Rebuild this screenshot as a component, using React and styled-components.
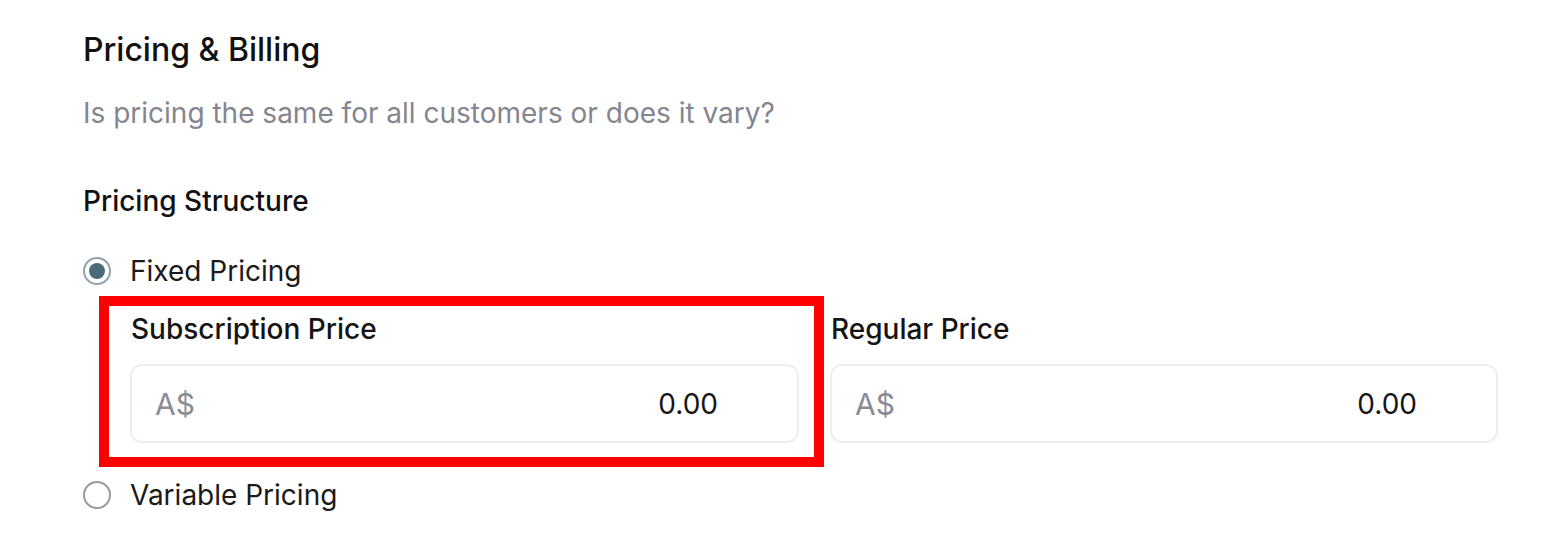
import React from "react";
import styled, { createGlobalStyle } from "styled-components";

const Global = createGlobalStyle`
  html, body { margin: 0; padding: 0; background: #ffffff; }
  body { font-family: Inter, "Noto Sans", sans-serif; color: #111111; }
`;

const Page = styled.div`
  width: 1544px;
  height: 554px;
  box-sizing: border-box;
  padding: 30px 46px 0 83px;
  overflow: hidden;
`;

const Title = styled.h2`
  margin: 0;
  font-size: 32px;
  line-height: 40px;
  font-weight: 500;
  color: #111111;
`;

const Subtitle = styled.p`
  margin: 27px 0 0;
  font-size: 28px;
  line-height: 32px;
  font-weight: 400;
  color: #85858f;
`;

const GroupLabel = styled.div`
  margin-top: 56px;
  font-size: 28px;
  line-height: 32px;
  font-weight: 500;
  color: #111111;
`;

const Options = styled.div`
  margin-top: 37px;
  display: flex;
  flex-direction: column;
`;

const RadioRow = styled.label`
  display: flex;
  align-items: center;
  gap: 19px;
  font-size: 28px;
  line-height: 34px;
  color: #1a1a1a;
`;

const RadioCircle = styled.span`
  box-sizing: border-box;
  width: 28px;
  height: 28px;
  border-radius: 50%;
  border: 2px solid ${(p) => (p.$checked ? "#8ea3ab" : "#9a9a9a")};
  display: flex;
  align-items: center;
  justify-content: center;
  flex: none;
  &::after {
    content: "";
    width: 16px;
    height: 16px;
    border-radius: 50%;
    background: #4b6b77;
    display: ${(p) => (p.$checked ? "block" : "none")};
  }
`;

const Fields = styled.div`
  margin: 25px 0 35px 47px;
  display: grid;
  grid-template-columns: 669px 668px;
  column-gap: 31px;
`;

const Field = styled.div`
  position: relative;
  display: flex;
  flex-direction: column;
`;

const Highlight = styled.div`
  position: absolute;
  left: -31px;
  right: -25px;
  top: -17px;
  bottom: -24px;
  border: 10px solid #ff0000;
  pointer-events: none;
`;

const FieldLabel = styled.div`
  font-size: 28px;
  line-height: 32px;
  font-weight: 500;
  color: #141414;
  padding-left: 1px;
`;

const InputBox = styled.div`
  margin-top: 19px;
  box-sizing: border-box;
  height: 79px;
  border: 2px solid #eeeeee;
  border-radius: 12px;
  display: flex;
  align-items: center;
  padding: 0 79px 0 23px;
  background: #ffffff;
`;

const Prefix = styled.span`
  font-size: 30px;
  color: #8b8b94;
`;

const Value = styled.span`
  margin-left: auto;
  font-size: 28px;
  color: #151515;
`;

function PriceField({ label, highlighted }) {
  return (
    <Field>
      {highlighted && <Highlight />}
      <FieldLabel>{label}</FieldLabel>
      <InputBox>
        <Prefix>A$</Prefix>
        <Value>0.00</Value>
      </InputBox>
    </Field>
  );
}

export default function App() {
  return (
    <>
      <Global />
      <Page>
        <Title>Pricing &amp; Billing</Title>
        <Subtitle>Is pricing the same for all customers or does it vary?</Subtitle>
        <GroupLabel>Pricing Structure</GroupLabel>
        <Options>
          <RadioRow>
            <RadioCircle $checked />
            Fixed Pricing
          </RadioRow>
          <Fields>
            <PriceField label="Subscription Price" highlighted />
            <PriceField label="Regular Price" />
          </Fields>
          <RadioRow>
            <RadioCircle />
            Variable Pricing
          </RadioRow>
        </Options>
      </Page>
    </>
  );
}
